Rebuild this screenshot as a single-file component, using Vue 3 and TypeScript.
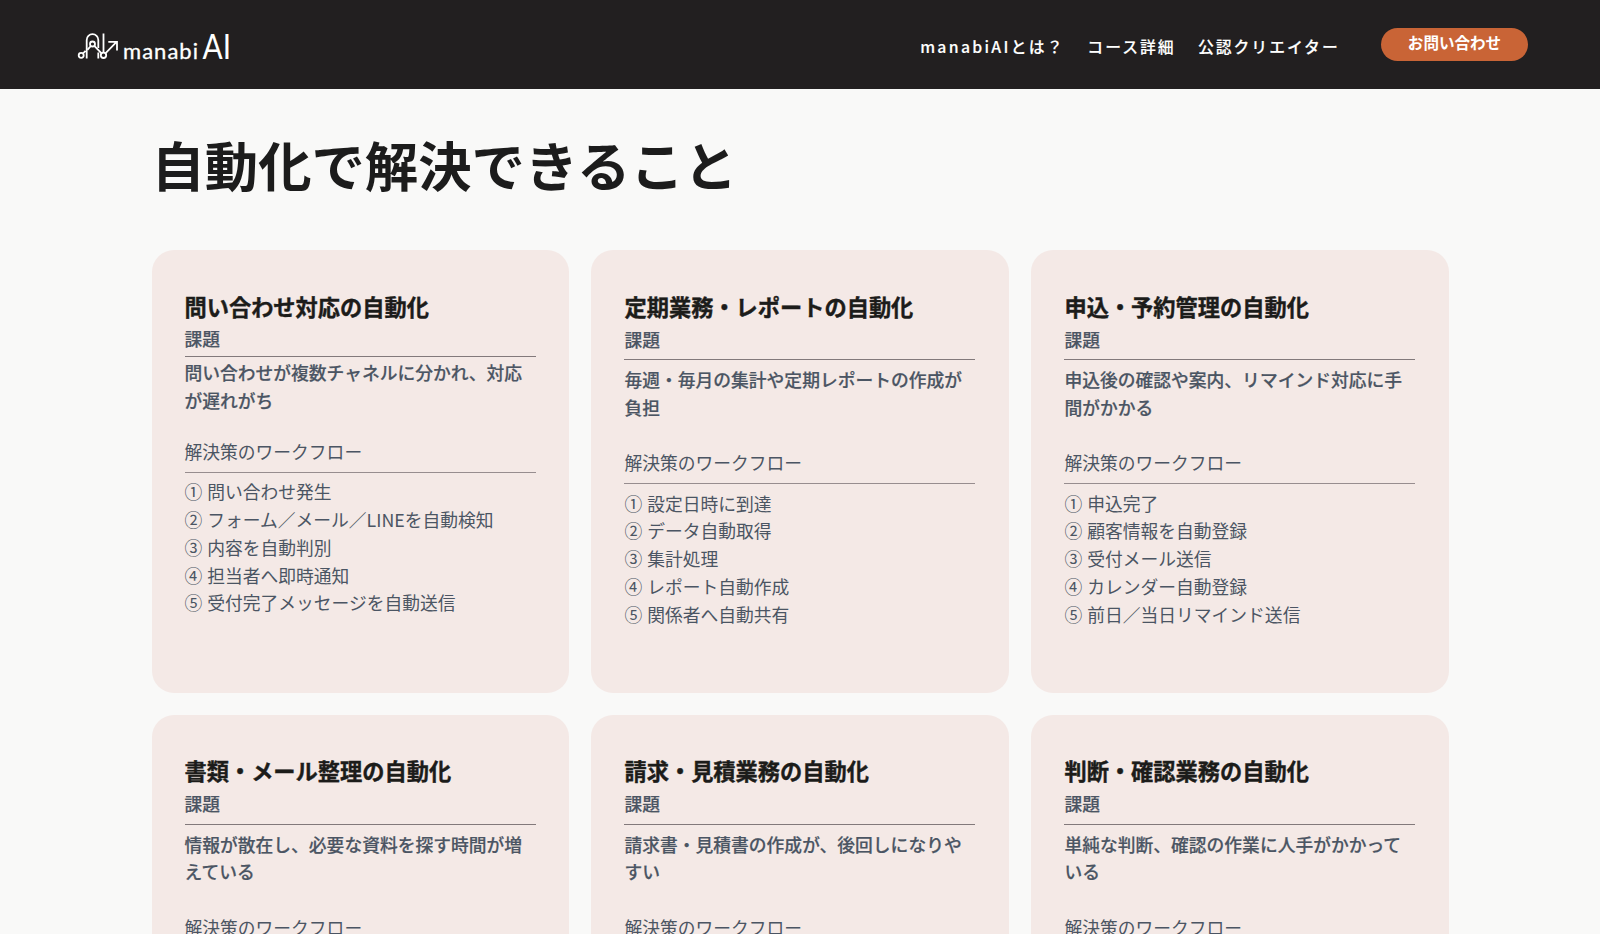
<script setup lang="ts">
interface Workflow {
  title: string
  issue: string
  steps: string[]
  compact?: boolean
}

const navItems: string[] = ['manabiAIとは？', 'コース詳細', '公認クリエイター']
const marks = ['①', '②', '③', '④', '⑤']

const workflows: Workflow[] = [
  {
    title: '問い合わせ対応の自動化',
    issue: '問い合わせが複数チャネルに分かれ、対応が遅れがち',
    steps: ['問い合わせ発生', 'フォーム／メール／LINEを自動検知', '内容を自動判別', '担当者へ即時通知', '受付完了メッセージを自動送信'],
    compact: true,
  },
  {
    title: '定期業務・レポートの自動化',
    issue: '毎週・毎月の集計や定期レポートの作成が負担',
    steps: ['設定日時に到達', 'データ自動取得', '集計処理', 'レポート自動作成', '関係者へ自動共有'],
  },
  {
    title: '申込・予約管理の自動化',
    issue: '申込後の確認や案内、リマインド対応に手間がかかる',
    steps: ['申込完了', '顧客情報を自動登録', '受付メール送信', 'カレンダー自動登録', '前日／当日リマインド送信'],
  },
  { title: '書類・メール整理の自動化', issue: '情報が散在し、必要な資料を探す時間が増えている', steps: [] },
  { title: '請求・見積業務の自動化', issue: '請求書・見積書の作成が、後回しになりやすい', steps: [] },
  { title: '判断・確認業務の自動化', issue: '単純な判断、確認の作業に人手がかかっている', steps: [] },
]
</script>

<template>
  <div class="page">
    <header class="header">
      <a class="logo" aria-label="manabi AI">
        <svg width="160" height="36" viewBox="0 0 160 36">
          <g fill="none" stroke="#fff" stroke-width="1.8">
            <circle cx="7.2" cy="27.3" r="2.5" />
            <path d="M9 25.5 L11.5 22.8 M12.7 30.5 V12 A5.8 5.8 0 0 1 24.3 12 V20" />
            <circle cx="18.5" cy="16" r="2.5" />
            <path d="M16.8 18 L13.4 21.8 M20.3 17.8 L27.6 25.4 M24.3 24.5 V30.5 M29.5 5.5 V24.6" />
            <circle cx="29.5" cy="27.3" r="2.7" />
            <path d="M31.4 25.3 L42.6 13.8 M34.3 13.8 H43 V22.4" />
          </g>
          <text class="word" x="49" y="30.5" textLength="75">manabi</text>
          <text class="ai" x="128.5" y="30.5" textLength="28.5" lengthAdjust="spacingAndGlyphs">AI</text>
        </svg>
      </a>
      <nav class="nav">
        <a v-for="item in navItems" :key="item">{{ item }}</a>
      </nav>
      <a class="contact">お問い合わせ</a>
    </header>
    <main class="main">
      <h1>自動化で解決できること</h1>
      <section class="grid">
        <article v-for="flow in workflows" :key="flow.title" class="card" :class="{ compact: flow.compact }">
          <h2>{{ flow.title }}</h2>
          <p class="label issue-label">課題</p>
          <p class="issue">{{ flow.issue }}</p>
          <p class="label flow-label">解決策のワークフロー</p>
          <ul>
            <li v-for="(step, i) in flow.steps" :key="step">{{ marks[i] }} {{ step }}</li>
          </ul>
        </article>
      </section>
    </main>
  </div>
</template>

<style>
body { background: #f9f9f8; }
</style>

<style scoped>
.page {
  height: 934px;
  overflow: hidden;
  font-family: "Noto Sans CJK JP", sans-serif;
  color: #4b5563;
  background: #f9f9f8;
}
.header {
  height: 89px;
  box-sizing: border-box;
  display: flex;
  align-items: flex-start;
  padding: 28px 72px 0 74px;
  background: #221f20;
  color: #fff;
}
.logo { display: block; height: 36px; }
.logo svg { display: block; overflow: visible; }
.logo text { fill: #fff; font-family: Lato, sans-serif; line-height: 1; }
.word { font-size: 22px; stroke: #fff; stroke-width: 0.3px; }
.ai { font-size: 35px; }
.nav {
  display: flex;
  gap: 22.4px;
  margin-left: auto;
  padding-top: 7px;
  font-size: 15.8px;
  line-height: 24px;
  font-weight: 500;
  letter-spacing: 2px;
}
.nav a {
  -webkit-text-stroke: 0.15px #fff;
}
.nav a:first-child { letter-spacing: 2.3px; }
.contact {
  box-sizing: border-box;
  width: 147px;
  height: 33px;
  margin-left: 41.3px;
  border-radius: 17px;
  background: #c96436;
  text-align: center;
  font-size: 15.56px;
  line-height: 29px;
  font-weight: 700;
}
.main { padding: 0 151.5px; }
h1 {
  margin: 0;
  padding-top: 35px;
  font-size: 53.33px;
  line-height: 80px;
  font-weight: 700;
  color: #1c1c1c;
}
.grid {
  display: grid;
  grid-template-columns: repeat(3, 417.3px);
  grid-auto-rows: 442.5px;
  gap: 22.4px 22.7px;
  margin-top: 46px;
}
.card {
  box-sizing: border-box;
  padding: 39.5px 33.3px 0 33px;
  border-radius: 22px;
  background: #f4e9e6;
  font-size: 17.78px;
  line-height: 27.78px;
}
h2 {
  margin: 0;
  font-size: 22.22px;
  line-height: 33px;
  font-weight: 700;
  color: #1c1c1a;
  -webkit-text-stroke: 0.4px #1c1c1a;
}
.card p { margin: 0; }
.label { border-bottom: 1px solid #82797b; }
.card .issue-label {
  padding: 3px 0 5.5px;
  font-weight: 500;
  -webkit-text-stroke: 0.2px #4b5563;
}
.card .issue {
  padding: 6px 0 28px;
  font-weight: 500;
  -webkit-text-stroke: 0.2px #4b5563;
}
.card .flow-label { padding-bottom: 6px; border-color: #978d8f; }
ul {
  list-style: none;
  margin: 0;
  padding: 5.5px 0 0;
  word-spacing: 1px;
}
.card.compact .issue-label { padding: 2px 0 3.8px; }
.card.compact .issue { padding: 2.1px 0 23.2px; }
</style>
